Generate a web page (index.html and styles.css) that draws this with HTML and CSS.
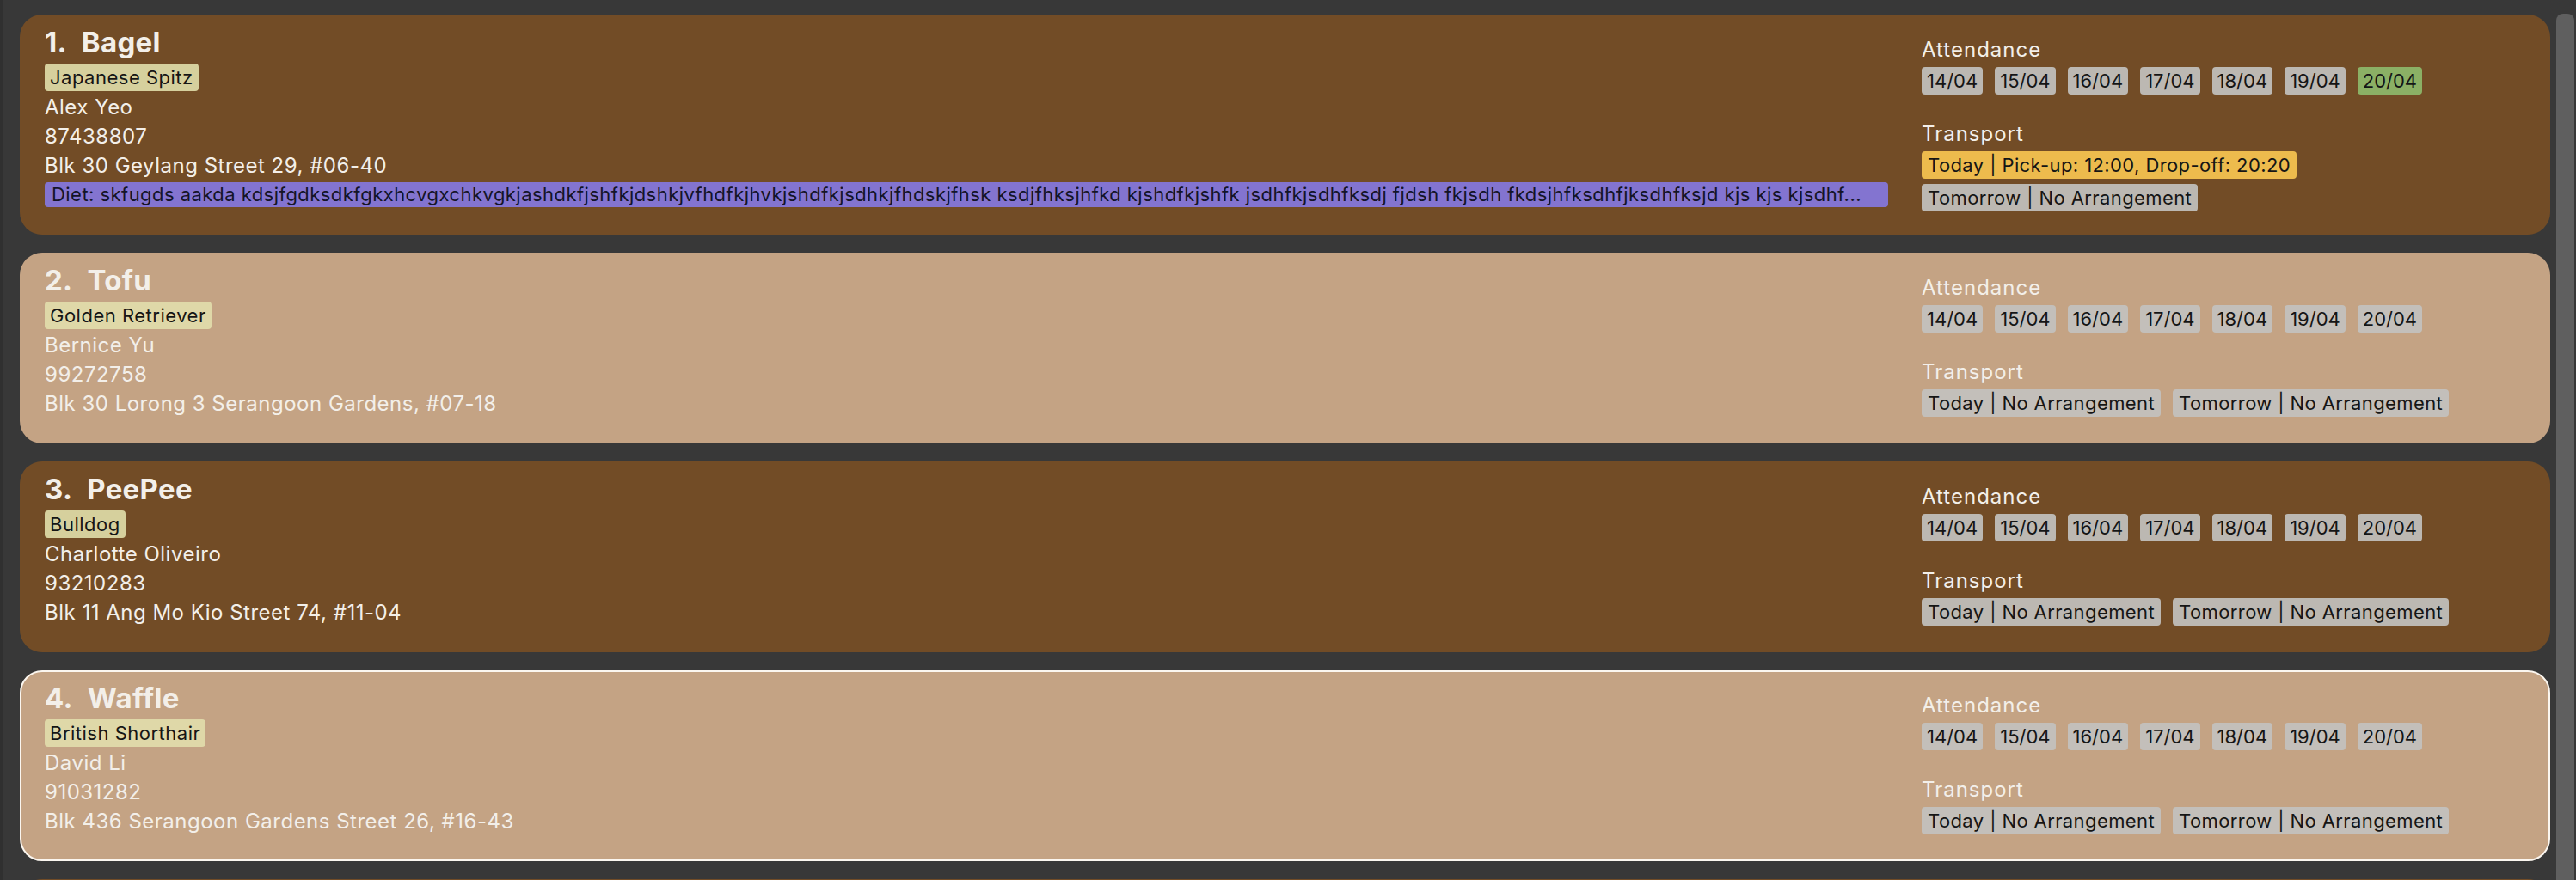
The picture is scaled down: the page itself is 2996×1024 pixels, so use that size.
FILE: index.html
```html
<!DOCTYPE html>
<html>
<head>
<meta charset="utf-8">
<link rel="stylesheet" href="styles.css">
</head>
<body>
<div class="window">
  <div class="list">
    <div class="card card-dark">
      <div class="info">
        <div class="title"><span class="idx">1.</span>Bagel</div>
        <div class="tags"><span class="tag">Japanese Spitz</span></div>
        <div class="line">Alex Yeo</div>
        <div class="line">87438807</div>
        <div class="line">Blk 30 Geylang Street 29, #06-40</div>
        <div class="diet">Diet: skfugds aakda kdsjfgdksdkfgkxhcvgxchkvgkjashdkfjshfkjdshkjvfhdfkjhvkjshdfkjsdhkjfhdskjfhsk ksdjfhksjhfkd kjshdfkjshfk jsdhfkjsdhfksdj fjdsh fkjsdh fkdsjhfksdhfjksdhfksjd kjs kjs kjsdhf...</div>
      </div>
      <div class="side">
        <div class="label">Attendance</div>
        <div class="chips">
          <span class="chip date">14/04</span><span class="chip date">15/04</span><span class="chip date">16/04</span><span class="chip date">17/04</span><span class="chip date">18/04</span><span class="chip date">19/04</span><span class="chip date chip-present">20/04</span>
        </div>
        <div class="label label-transport">Transport</div>
        <div class="chips">
          <span class="chip chip-arranged">Today | Pick-up: 12:00, Drop-off: 20:20</span><span class="chip">Tomorrow | No Arrangement</span>
        </div>
      </div>
    </div>

    <div class="card card-light">
      <div class="info">
        <div class="title"><span class="idx">2.</span>Tofu</div>
        <div class="tags"><span class="tag">Golden Retriever</span></div>
        <div class="line">Bernice Yu</div>
        <div class="line">99272758</div>
        <div class="line">Blk 30 Lorong 3 Serangoon Gardens, #07-18</div>
      </div>
      <div class="side">
        <div class="label">Attendance</div>
        <div class="chips">
          <span class="chip date">14/04</span><span class="chip date">15/04</span><span class="chip date">16/04</span><span class="chip date">17/04</span><span class="chip date">18/04</span><span class="chip date">19/04</span><span class="chip date">20/04</span>
        </div>
        <div class="label label-transport">Transport</div>
        <div class="chips">
          <span class="chip">Today | No Arrangement</span><span class="chip">Tomorrow | No Arrangement</span>
        </div>
      </div>
    </div>

    <div class="card card-dark">
      <div class="info">
        <div class="title"><span class="idx">3.</span>PeePee</div>
        <div class="tags"><span class="tag">Bulldog</span></div>
        <div class="line">Charlotte Oliveiro</div>
        <div class="line">93210283</div>
        <div class="line">Blk 11 Ang Mo Kio Street 74, #11-04</div>
      </div>
      <div class="side">
        <div class="label">Attendance</div>
        <div class="chips">
          <span class="chip date">14/04</span><span class="chip date">15/04</span><span class="chip date">16/04</span><span class="chip date">17/04</span><span class="chip date">18/04</span><span class="chip date">19/04</span><span class="chip date">20/04</span>
        </div>
        <div class="label label-transport">Transport</div>
        <div class="chips">
          <span class="chip">Today | No Arrangement</span><span class="chip">Tomorrow | No Arrangement</span>
        </div>
      </div>
    </div>

    <div class="card card-light card-selected">
      <div class="info">
        <div class="title"><span class="idx">4.</span>Waffle</div>
        <div class="tags"><span class="tag">British Shorthair</span></div>
        <div class="line">David Li</div>
        <div class="line">91031282</div>
        <div class="line">Blk 436 Serangoon Gardens Street 26, #16-43</div>
      </div>
      <div class="side">
        <div class="label">Attendance</div>
        <div class="chips">
          <span class="chip date">14/04</span><span class="chip date">15/04</span><span class="chip date">16/04</span><span class="chip date">17/04</span><span class="chip date">18/04</span><span class="chip date">19/04</span><span class="chip date">20/04</span>
        </div>
        <div class="label label-transport">Transport</div>
        <div class="chips">
          <span class="chip">Today | No Arrangement</span><span class="chip">Tomorrow | No Arrangement</span>
        </div>
      </div>
    </div>

    <div class="card card-dark"></div>
  </div>
  <div class="scrollbar"><div class="thumb"></div></div>
</div>
</body>
</html>
```
FILE: styles.css
```css
html, body {
  margin: 0;
  padding: 0;
  background: #383838;
  height: 1024px;
  overflow: hidden;
}
body {
  font-family: "Inter", "Open Sans", sans-serif;
  color: #f3efe9;
}
.window {
  display: flex;
  height: 1024px;
  border-left: 3px solid #303030;
  box-sizing: border-box;
}
.list {
  flex: 1;
  display: flex;
  flex-direction: column;
  gap: 21px;
  padding: 17px 0 0 20px;
  overflow: hidden;
}
.card {
  flex: none;
  display: flex;
  border-radius: 26px;
  border: 2px solid transparent;
  padding: 10px 28px 27px 27px;
  min-height: 222px;
  box-sizing: border-box;
}
.card-dark { background: #724c26; }
.card-light { background: #c4a384; }
.card-selected { border-color: #fbf6ef; }
.info {
  flex: 1;
  min-width: 0;
}
.title {
  font-size: 33px;
  font-weight: 700;
  line-height: 40px;
  height: 40px;
  letter-spacing: 0.3px;
}
.idx { margin-right: 17px; }
.tags {
  margin-top: 5px;
  display: flex;
}
.tag {
  font-size: 22px;
  line-height: 32px;
  padding: 0 6px;
  border-radius: 4px;
  color: #151515;
  background: #d6d09d;
  letter-spacing: 0.5px;
}
.card-light .tag { background: #dfd8a8; }
.line {
  font-size: 24px;
  line-height: 34px;
  letter-spacing: 0.5px;
}
.tags + .line { margin-top: 2px; }
.diet {
  margin-top: 2px;
  font-size: 22px;
  line-height: 29px;
  padding: 0 8px;
  border-radius: 4px;
  background: #8374d0;
  color: #141428;
  white-space: nowrap;
  overflow: hidden;
  text-overflow: ellipsis;
  letter-spacing: 0.45px;
}
.card-dark:first-child { padding-bottom: 25px; }
.side {
  flex: none;
  width: 701px;
  margin-left: 39px;
  padding-top: 14px;
}
.label {
  font-size: 24px;
  line-height: 30px;
  letter-spacing: 1px;
}
.label-transport { margin-top: 31px; }
.chips {
  display: flex;
  flex-wrap: wrap;
  gap: 6px 14px;
  margin-top: 5px;
}
.chip {
  font-size: 22px;
  line-height: 32px;
  padding: 0 7px;
  border-radius: 4px;
  color: #151515;
  background: #bcb8b2;
  white-space: nowrap;
  letter-spacing: 0.4px;
}
.chip.date {
  padding: 0 6px;
  letter-spacing: 0;
}
.card-light .chip { background: #c3bfba; }
.chip.chip-present { background: #8bb065; }
.chip.chip-arranged { background: #edbb4d; }
.scrollbar {
  flex: none;
  width: 21px;
  margin: 16px 2px 0 7px;
}
.thumb {
  height: 100%;
  background: #5f5f5f;
  border-radius: 8px 8px 0 0;
}
```
